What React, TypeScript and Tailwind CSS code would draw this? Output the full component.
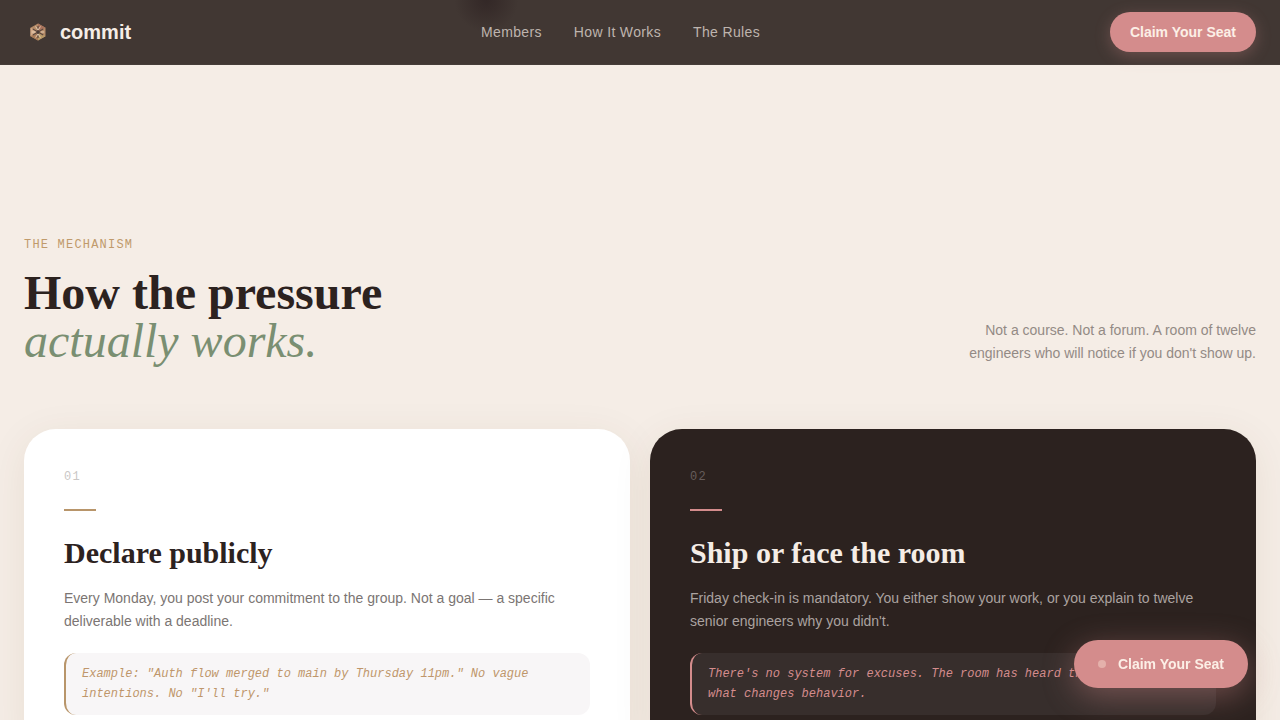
import clsx from "clsx";

const navLinks = [
  { label: "Members", href: "#members" },
  { label: "How It Works", href: "#how-it-works" },
  { label: "The Rules", href: "#rules" },
];

const steps = [
  {
    number: "01",
    title: "Declare publicly",
    body: "Every Monday, you post your commitment to the group. Not a goal — a specific deliverable with a deadline.",
    note: "Example: \"Auth flow merged to main by Thursday 11pm.\" No vague intentions. No \"I'll try.\"",
    dark: false,
  },
  {
    number: "02",
    title: "Ship or face the room",
    body: "Friday check-in is mandatory. You either show your work, or you explain to twelve senior engineers why you didn't.",
    note: "There's no system for excuses. The room has heard them all. That's what changes behavior.",
    dark: true,
  },
];

function Logo() {
  return (
    <svg viewBox="0 0 28 28" className="h-7 w-7" aria-hidden="true">
      <path d="M14 5.5 21.5 9.8v8.4L14 22.5 6.5 18.2V9.8z" fill="#b58b68" />
      <path d="M14 5.5 21.5 9.8 14 14z" fill="#a9735c" />
      <path d="M6.5 9.8 14 14 6.5 18.2z" fill="#d3a987" />
      <path d="M14 14 21.5 18.2 14 22.5z" fill="#b99a68" />
      <path d="M14 14v8.5L6.5 18.2z" fill="#a97b58" />
      <path
        d="M14 8v12M8.8 11l10.4 6M8.8 17l10.4-6"
        stroke="#5b4840"
        strokeWidth="1.2"
      />
      <path
        d="M11.5 8.5 14 12l2.5-3.5M11.5 19.5 14 16l2.5 3.5M7.8 14h3.4M16.8 14h3.4"
        stroke="#e8d3bb"
        strokeWidth="0.9"
        fill="none"
      />
      <circle cx="14" cy="14" r="1.5" fill="#4a3b37" />
    </svg>
  );
}

function Header() {
  return (
    <header className="sticky top-0 z-20 border-b border-[#463d39] bg-[#413733] bg-[radial-gradient(circle_at_38%_0,#332827_0,#372c2a_10px,transparent_32px)] font-['Liberation_Sans',sans-serif]">
      <div className="flex h-16 items-center justify-between px-6">
        <a href="#" className="flex items-center gap-2">
          <Logo />
          <span className="text-xl font-bold text-[#f5ede6]">commit</span>
        </a>

        <nav className="flex items-center gap-8">
          {navLinks.map((link) => (
            <a
              key={link.href}
              href={link.href}
              className="text-sm tracking-wide text-[#beb4ae] hover:text-[#f5ede6]"
            >
              {link.label}
            </a>
          ))}
        </nav>

        <button
          type="button"
          className="h-10 rounded-full bg-[#d48c8c] px-5 text-sm font-bold text-[#fcefe6] shadow-[0_4px_16px_rgba(212,140,140,0.3)]"
        >
          Claim Your Seat
        </button>
      </div>
    </header>
  );
}

function StepCard({ step }: { step: (typeof steps)[number] }) {
  return (
    <article
      className={clsx(
        "rounded-[32px] p-10 shadow-[0_8px_40px_rgba(90,60,30,0.08)]",
        step.dark ? "bg-[#2c221f]" : "bg-white"
      )}
    >
      <p
        className={clsx(
          "font-['Liberation_Mono',monospace] text-xs tracking-widest",
          step.dark ? "text-[#665d5b]" : "text-[#cac7c6]"
        )}
      >
        {step.number}
      </p>
      <div
        className={clsx(
          "my-6 h-0.5 w-8",
          step.dark ? "bg-[#d48c8c]" : "bg-[#b8956a]"
        )}
      />
      <h3
        className={clsx(
          "font-['Liberation_Serif',serif] text-3xl font-bold",
          step.dark ? "text-[#f5ede6]" : "text-[#2c221f]"
        )}
      >
        {step.title}
      </h3>
      <p
        className={clsx(
          "mt-4 text-sm leading-[23px]",
          step.dark ? "text-[#aba3a0]" : "text-[#7b7573]"
        )}
      >
        {step.body}
      </p>
      <div
        className={clsx(
          "mt-5 rounded-xl border-l-2 px-4 py-[11px] font-['Liberation_Mono',monospace] text-xs leading-5 italic",
          step.dark
            ? "border-[#d48c8c] bg-[#372e2c] text-[#d48c8c]"
            : "border-[#b8956a] bg-[#f8f6f7] text-[#bf966b]"
        )}
      >
        {step.note}
      </div>
    </article>
  );
}

export default function App() {
  return (
    <div className="min-h-screen bg-[#f5ede6] font-['Liberation_Sans',sans-serif]">
      <Header />

      <main>
        <section id="how-it-works" className="px-6 pt-43">
          <div className="mb-16 flex items-end justify-between gap-8">
            <div>
              <p className="mb-4 font-['Liberation_Mono',monospace] text-xs tracking-widest text-[#c09a6b] uppercase">
                The Mechanism
              </p>
              <h2 className="font-['Liberation_Serif',serif] text-5xl leading-none font-bold text-[#2c221f]">
                How the pressure
                <br />
                <em className="font-normal text-[#7a8f72]">actually works.</em>
              </h2>
            </div>
            <p className="max-w-xs text-right text-sm leading-[23px] text-[#938a85]">
              Not a course. Not a forum. A room of twelve engineers who will
              notice if you don't show up.
            </p>
          </div>

          <div className="grid grid-cols-2 gap-5">
            {steps.map((step) => (
              <StepCard key={step.number} step={step} />
            ))}
          </div>
        </section>
      </main>

      {/* Floating CTA */}
      <button
        type="button"
        className="fixed right-8 bottom-8 z-30 flex h-12 items-center gap-3 rounded-full bg-[#d48c8c] px-6 text-sm font-bold text-[#fcefe6] shadow-[0_8px_32px_rgba(212,140,140,0.4)]"
      >
        <span className="h-2 w-2 rounded-full bg-[#e4b1ab]" />
        Claim Your Seat
      </button>
    </div>
  );
}
